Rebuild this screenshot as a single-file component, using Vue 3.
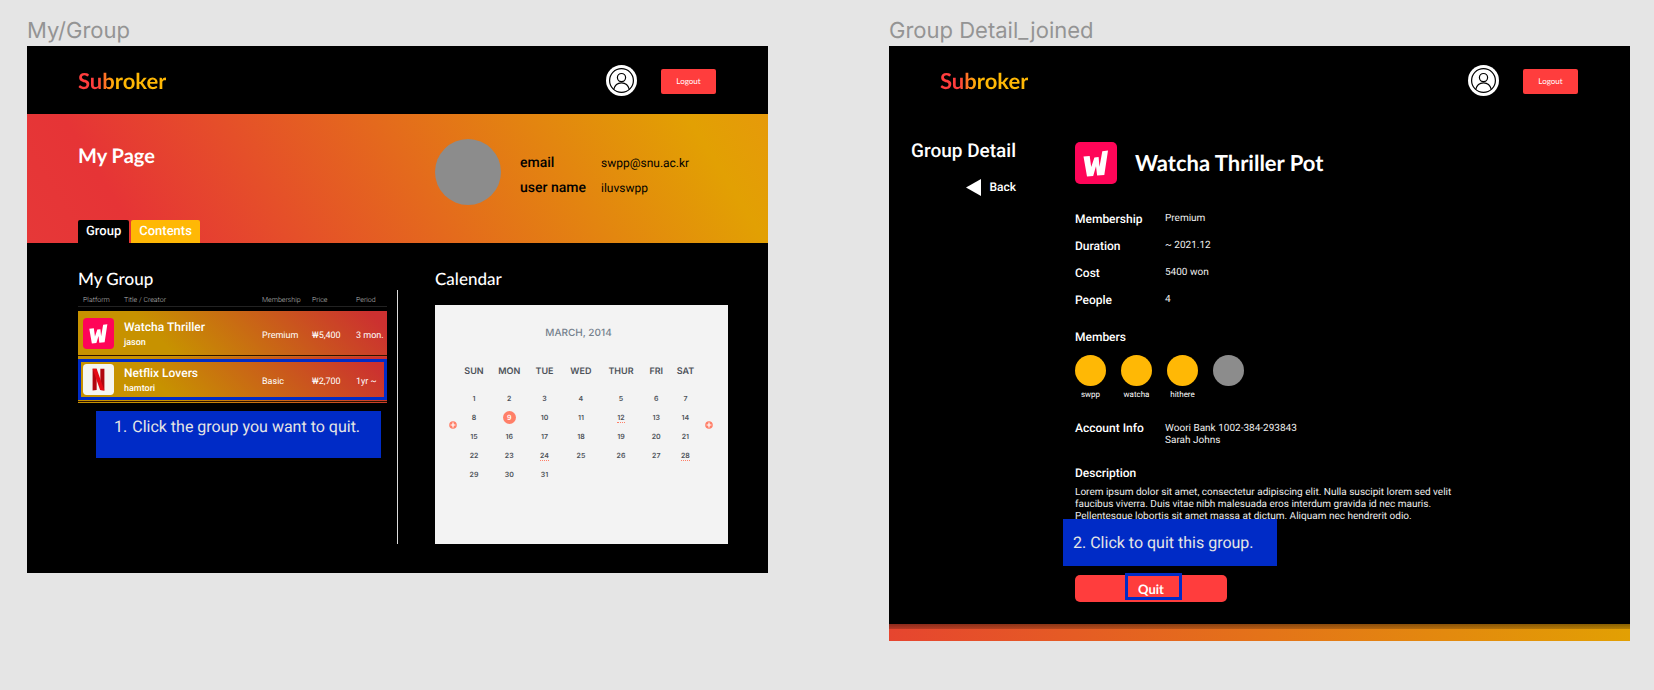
<script setup>
const groups = [
  { id: 'watcha', title: 'Watcha Thriller', creator: 'jason', membership: 'Premium', price: '₩5,400', period: '3 mon.', selected: false },
  { id: 'netflix', title: 'Netflix Lovers', creator: 'hamtori', membership: 'Basic', price: '₩2,700', period: '1yr ~', selected: true },
]
const weekdays = ['SUN', 'MON', 'TUE', 'WED', 'THUR', 'FRI', 'SAT']
const weeks = [
  [1, 2, 3, 4, 5, 6, 7],
  [8, 9, 10, 11, 12, 13, 14],
  [15, 16, 17, 18, 19, 20, 21],
  [22, 23, 24, 25, 26, 27, 28],
  [29, 30, 31, '', '', '', ''],
]
const marked = [12, 24, 28]
const facts = [
  ['Membership', 'Premium'],
  ['Duration', '~ 2021.12'],
  ['Cost', '5400 won'],
  ['People', '4'],
]
const members = ['swpp', 'watcha', 'hithere', '']
</script>

<template>
  <main class="board">
    <section class="column">
      <h2 class="frame-name">My/Group</h2>
      <div class="frame">
        <header class="topbar">
          <a class="logo" href="#">Subroker</a>
          <button class="user" type="button" aria-label="Account">
            <svg viewBox="0 0 31 31" width="31" height="31">
              <circle cx="15.5" cy="15.5" r="15.5" fill="#fff" />
              <g fill="none" stroke="#000" stroke-width="1.2">
                <circle cx="15.5" cy="15.5" r="11.9" />
                <circle cx="15.5" cy="12.6" r="4.1" />
                <path d="M7.7 24.4c1-4 4-6.6 7.800-6.600s6.800 2.600 7.800 6.600" />
              </g>
            </svg>
          </button>
          <button class="logout" type="button">Logout</button>
        </header>

        <div class="banner">
          <div class="banner-side">
            <h1 class="page-title">My Page</h1>
            <nav class="tabs">
              <a class="tab active" href="#">Group</a>
              <a class="tab" href="#">Contents</a>
            </nav>
          </div>
          <div class="profile">
            <span class="portrait"></span>
            <dl class="identity">
              <dt>email</dt><dd>swpp@snu.ac.kr</dd>
              <dt>user name</dt><dd>iluvswpp</dd>
            </dl>
          </div>
        </div>

        <div class="content">
          <section class="groups">
            <h3 class="heading">My Group</h3>
            <table class="group-table">
              <colgroup><col class="c-icon"><col><col class="c-member"><col class="c-price"><col class="c-period"></colgroup>
              <thead>
                <tr><th class="first">Platform</th><th>Title / Creator</th><th>Membership</th><th>Price</th><th>Period</th></tr>
              </thead>
              <tbody>
                <tr v-for="g in groups" :key="g.id" :class="{ selected: g.selected }">
                  <td class="first">
                    <svg v-if="g.id === 'watcha'" class="app-icon" viewBox="0 0 42 42">
                      <rect width="42" height="42" rx="5" fill="#ff0558" />
                      <path fill="#fff" d="M8.500 14.500l6.200-.6 1.500 11.200 3.200-9.600 4.200-.4.900 9.700 2.800-15.600 5.700-.6-3.700 24.300-7.200.6-1.100-9.200-2.800 9.600-6.200.6z" />
                    </svg>
                    <svg v-else class="app-icon" viewBox="0 0 42 42">
                      <rect width="42" height="42" rx="5" fill="#f5f5f1" />
                      <path fill="#b1060f" d="M13 6.500h5.500v28.700l-5.500.6zM23.500 6.500H29v29.300l-5.500-.6z" />
                      <path fill="#e50914" d="M13 6.500h5.500L29 35.800l-5.800-.6z" />
                    </svg>
                  </td>
                  <td><strong class="g-title">{{ g.title }}</strong><span class="g-creator">{{ g.creator }}</span></td>
                  <td class="value">{{ g.membership }}</td>
                  <td class="value">{{ g.price }}</td>
                  <td class="value">{{ g.period }}</td>
                </tr>
              </tbody>
            </table>
            <p class="note note-first"><span>1.</span><span>Click the group you want to quit.</span></p>
          </section>

          <section class="agenda">
            <h3 class="heading">Calendar</h3>
            <div class="calendar">
              <button class="step" type="button" aria-label="Previous month">
                <svg viewBox="0 0 8 8" width="8" height="8"><circle cx="4" cy="4" r="3.800" fill="#ff7f68" /><path d="M4 1.600v4.800M1.600 4h4.800" stroke="#fff" stroke-width="1.200" /></svg>
              </button>
              <table class="month">
                <caption>MARCH, 2014</caption>
                <colgroup><col v-for="d in weekdays" :key="d" :class="'d-' + d.toLowerCase()"></colgroup>
                <thead><tr><th v-for="d in weekdays" :key="d">{{ d }}</th></tr></thead>
                <tbody>
                  <tr v-for="(week, i) in weeks" :key="i">
                    <td v-for="(day, j) in week" :key="j">
                      <span :class="{ today: day === 9, marked: marked.includes(day) }">{{ day }}</span>
                    </td>
                  </tr>
                </tbody>
              </table>
              <button class="step" type="button" aria-label="Next month">
                <svg viewBox="0 0 8 8" width="8" height="8"><circle cx="4" cy="4" r="3.800" fill="#ff7f68" /><path d="M4 1.600v4.800M1.600 4h4.800" stroke="#fff" stroke-width="1.200" /></svg>
              </button>
            </div>
          </section>
        </div>
      </div>
    </section>

    <section class="column">
      <h2 class="frame-name">Group Detail_joined</h2>
      <div class="frame">
        <header class="topbar">
          <a class="logo" href="#">Subroker</a>
          <button class="user" type="button" aria-label="Account">
            <svg viewBox="0 0 31 31" width="31" height="31">
              <circle cx="15.5" cy="15.5" r="15.5" fill="#fff" />
              <g fill="none" stroke="#000" stroke-width="1.2">
                <circle cx="15.5" cy="15.5" r="11.9" />
                <circle cx="15.5" cy="12.6" r="4.1" />
                <path d="M7.7 24.4c1-4 4-6.6 7.800-6.600s6.800 2.600 7.800 6.600" />
              </g>
            </svg>
          </button>
          <button class="logout" type="button">Logout</button>
        </header>

        <div class="detail">
          <aside class="side">
            <h1 class="side-title">Group Detail</h1>
            <a class="back" href="#">
              <svg viewBox="0 0 15 17" width="15" height="17"><path d="M0 8.500L15 0v17z" fill="#fff" /></svg>
              Back
            </a>
          </aside>
          <article class="pot">
            <div class="pot-head">
              <svg class="pot-icon" viewBox="0 0 42 42">
                <rect width="42" height="42" rx="5" fill="#ff0558" />
                <path fill="#fff" d="M8.500 14.500l6.200-.6 1.500 11.200 3.200-9.600 4.200-.4.900 9.700 2.800-15.600 5.700-.6-3.700 24.300-7.200.6-1.100-9.200-2.800 9.600-6.200.6z" />
              </svg>
              <h2 class="pot-title">Watcha Thriller Pot</h2>
            </div>
            <dl class="facts">
              <template v-for="f in facts" :key="f[0]"><dt>{{ f[0] }}</dt><dd>{{ f[1] }}</dd></template>
            </dl>
            <h3 class="label">Members</h3>
            <ul class="members">
              <li v-for="m in members" :key="m"><span class="dot" :class="{ empty: !m }"></span>{{ m }}</li>
            </ul>
            <dl class="account">
              <dt>Account Info</dt><dd>Woori Bank 1002-384-293843<br>Sarah Johns</dd>
            </dl>
            <h3 class="label about-label">Description</h3>
            <div class="about">
              <p class="text">Lorem ipsum dolor sit amet, consectetur adipiscing elit. Nulla suscipit lorem sed velit<br>faucibus viverra. Duis vitae nibh malesuada eros interdum gravida id nec mauris.<br>Pellentesque lobortis sit amet massa at dictum. Aliquam nec hendrerit odio.</p>
              <p class="note note-second">2. Click to quit this group.</p>
            </div>
            <button class="quit" type="button">Quit</button>
          </article>
        </div>
        <div class="strip"></div>
      </div>
    </section>
  </main>
</template>

<style>
body { background: #e5e5e5; }
</style>

<style scoped>
.board {
  --red: #ff3d3d;
  --amber: #ffb805;
  --blue: #002bc6;
  --brand: Lato, "Liberation Sans", sans-serif;
  display: grid;
  grid-template-columns: repeat(2, minmax(0, 1fr));
  gap: 121px;
  align-items: start;
  padding: 17px 24px 0 27px;
  font-family: Roboto, "Liberation Sans", sans-serif;
  text-rendering: geometricPrecision;
  color: #fff;
}
.board *, .board *::before, .board *::after { box-sizing: border-box; }
h1, h2, h3, p, dl, dd, ul { margin: 0; padding: 0; }
ul { list-style: none; }
a { color: inherit; text-decoration: none; }
button { font: inherit; color: inherit; border: 0; padding: 0; background: none; cursor: pointer; text-rendering: inherit; }
svg { display: block; }

.frame-name { font: 400 22px/28px Inter, sans-serif; color: #949494; padding-bottom: 1px; }
.frame { background: #000; }

.topbar { display: flex; align-items: center; gap: 24px; height: 68px; padding: 0 52px 0 51px; }
.logo {
  margin-right: auto;
  padding-top: 2px;
  font: 700 22px/28px var(--brand);
  background: linear-gradient(90deg, var(--red) 22%, var(--amber) 42%);
  background-clip: text;
  -webkit-background-clip: text;
  color: transparent;
}
.logout { width: 55px; height: 25px; margin-top: 2px; border-radius: 2px; background: var(--red); font: 400 8px/12px var(--brand); }

.banner {
  display: grid;
  grid-template-columns: 357fr 281fr;
  height: 129px;
  padding: 0 52px 0 51px;
  background: linear-gradient(58deg, #e63838 0%, #e63436 14%, #e2a003 90%, #e69a0a 100%);
}
.banner-side { display: flex; flex-direction: column; justify-content: space-between; padding-top: 28px; }
.page-title { font: 700 20px/28px var(--brand); }
.tabs { display: flex; gap: 2px; }
.tab { padding: 1px 8px 0; border-radius: 2px 2px 0 0; background: var(--amber); font-size: 13px; line-height: 22px; font-weight: 500; }
.tab.active { background: #000; }
.profile { display: flex; gap: 19px; padding-top: 25px; }
.portrait { width: 66px; height: 66px; border-radius: 50%; background: #8c8c8c; }
.identity { display: grid; grid-template-columns: 81px auto; grid-auto-rows: 25px; align-items: center; padding-top: 11px; color: #000; white-space: nowrap; }
.identity dt { font-size: 14px; font-weight: 500; }
.identity dd { padding-top: 1px; font-size: 12px; }

.content { display: grid; grid-template-columns: 320fr 330fr; height: 330px; padding: 22px 40px 29px 51px; }
.heading { font: 500 17px/28px var(--brand); }
.groups { position: relative; padding-right: 11px; }
.groups::before { content: ""; position: absolute; right: 0; top: 25px; bottom: 0; width: 1px; background: #ddd; }
.group-table { width: 100%; border-collapse: collapse; table-layout: fixed; text-align: left; white-space: nowrap; }
.c-icon { width: 46px; }
.c-member { width: 50px; }
.c-price { width: 44px; }
.c-period { width: 31px; }
.group-table th, .group-table td { padding: 0; }
.group-table .first { padding-left: 5px; }
.group-table th { height: 13px; padding-top: 2px; border-bottom: 1px solid #222; font-size: 7px; line-height: 10px; font-weight: 300; color: #bbb; }
.group-table thead::after { content: ""; display: block; height: 4px; }
.group-table tbody tr {
  position: relative;
  height: 46px;
  background: linear-gradient(#301400, #301400) 0 calc(100% - 1px) / 100% 1px no-repeat, linear-gradient(45deg, #c79200 28%, #cc3030 95%);
}
.group-table td { font-size: 9px; line-height: 12px; }
.group-table .value { padding-top: 4px; }
.group-table .selected .first::after { content: ""; position: absolute; inset: 2px 0 3px; border: 3px solid var(--blue); }
.app-icon { width: 31px; height: 31px; }
.g-title { display: block; font-size: 12px; line-height: 16px; font-weight: 500; }
.g-creator { display: block; padding-top: 2px; font-weight: 500; }
.note { height: 47px; background: var(--blue); color: #e5e5e5; font-size: 16px; line-height: 24px; white-space: nowrap; }
.note-first { display: flex; gap: 5px; margin: 8px 6px 0 18px; padding: 4px 18px; }

.agenda { padding-left: 37px; }
.calendar { display: flex; align-items: center; height: 239px; margin-top: 12px; padding: 0 15px 0 14px; background: #f3f3f3; }
.step { flex: none; height: 8px; }
.month { flex: 1; align-self: start; table-layout: fixed; border-collapse: collapse; margin: 22px 5px 0 0; font-family: Inter, sans-serif; color: #4d5259; text-align: center; }
.month caption { padding-bottom: 25px; font-size: 10px; line-height: 12px; font-weight: 500; color: #74808c; }
.month th, .month td { padding: 0; }
.month th { height: 16px; font-size: 9px; line-height: 16px; font-weight: 600; }
.month thead::after { content: ""; display: block; height: 9px; }
.month td { height: 19px; font-size: 7px; line-height: 9px; font-weight: 600; }
.d-sun { width: 14%; } .d-mon { width: 15%; } .d-tue { width: 14%; } .d-wed { width: 16%; } .d-thur { width: 17%; } .d-fri { width: 12%; } .d-sat { width: 12%; }
.today { display: inline-block; width: 13px; height: 13px; border-radius: 50%; background: #ff7f68; color: #fff; line-height: 13px; }
.marked { border-bottom: 1px dotted #ff7f68; }

.detail { display: grid; grid-template-columns: 127px minmax(0, 1fr); column-gap: 59px; height: 510px; padding: 25px 165px 0 0; }
.side { display: flex; flex-direction: column; align-items: flex-end; gap: 14px; }
.side-title { font-size: 19px; line-height: 24px; font-weight: 500; white-space: nowrap; }
.back { display: flex; align-items: center; gap: 8px; font-size: 12px; line-height: 20px; font-weight: 500; }
.pot { padding-top: 3px; }
.pot-head { display: flex; align-items: center; gap: 18px; }
.pot-icon { width: 42px; height: 42px; }
.pot-title { font: 700 22px/28px var(--brand); }
.facts { display: grid; grid-template-columns: 90px 1fr; grid-auto-rows: 27px; align-items: center; margin-top: 21px; }
.pot dt, .label { font-size: 12px; line-height: 16px; font-weight: 500; }
.pot dd, .text { font-size: 10px; line-height: 12px; color: #eee; white-space: nowrap; }
.label { margin-top: 16px; }
.members { display: flex; gap: 15px; margin-top: 10px; }
.members li { display: flex; flex-direction: column; align-items: center; gap: 4px; width: 31px; font-size: 8px; line-height: 10px; }
.dot { width: 31px; height: 31px; border-radius: 50%; background: var(--amber); }
.dot.empty { background: #8c8c8c; }
.account { display: grid; grid-template-columns: 90px 1fr; align-items: start; margin-top: 20px; }
.account dd { padding-top: 3px; }
.about-label { margin-top: 18px; }
.about { position: relative; height: 70px; margin-top: 6px; }
.note-second { position: absolute; left: -12px; top: 32px; width: 214px; padding: 12px 10px; }
.quit { position: relative; display: block; width: 152px; height: 27px; margin-top: 18px; border-radius: 5px; background: var(--red); font: 700 13px/22px var(--brand); }
.quit::after { content: ""; position: absolute; left: 50px; top: -2px; width: 57px; height: 27px; border: 3px solid var(--blue); }
.strip { height: 17px; background: linear-gradient(#0006, #0003) top / 100% 5px no-repeat, linear-gradient(90deg, #e6452f, #e2a003); }
</style>
